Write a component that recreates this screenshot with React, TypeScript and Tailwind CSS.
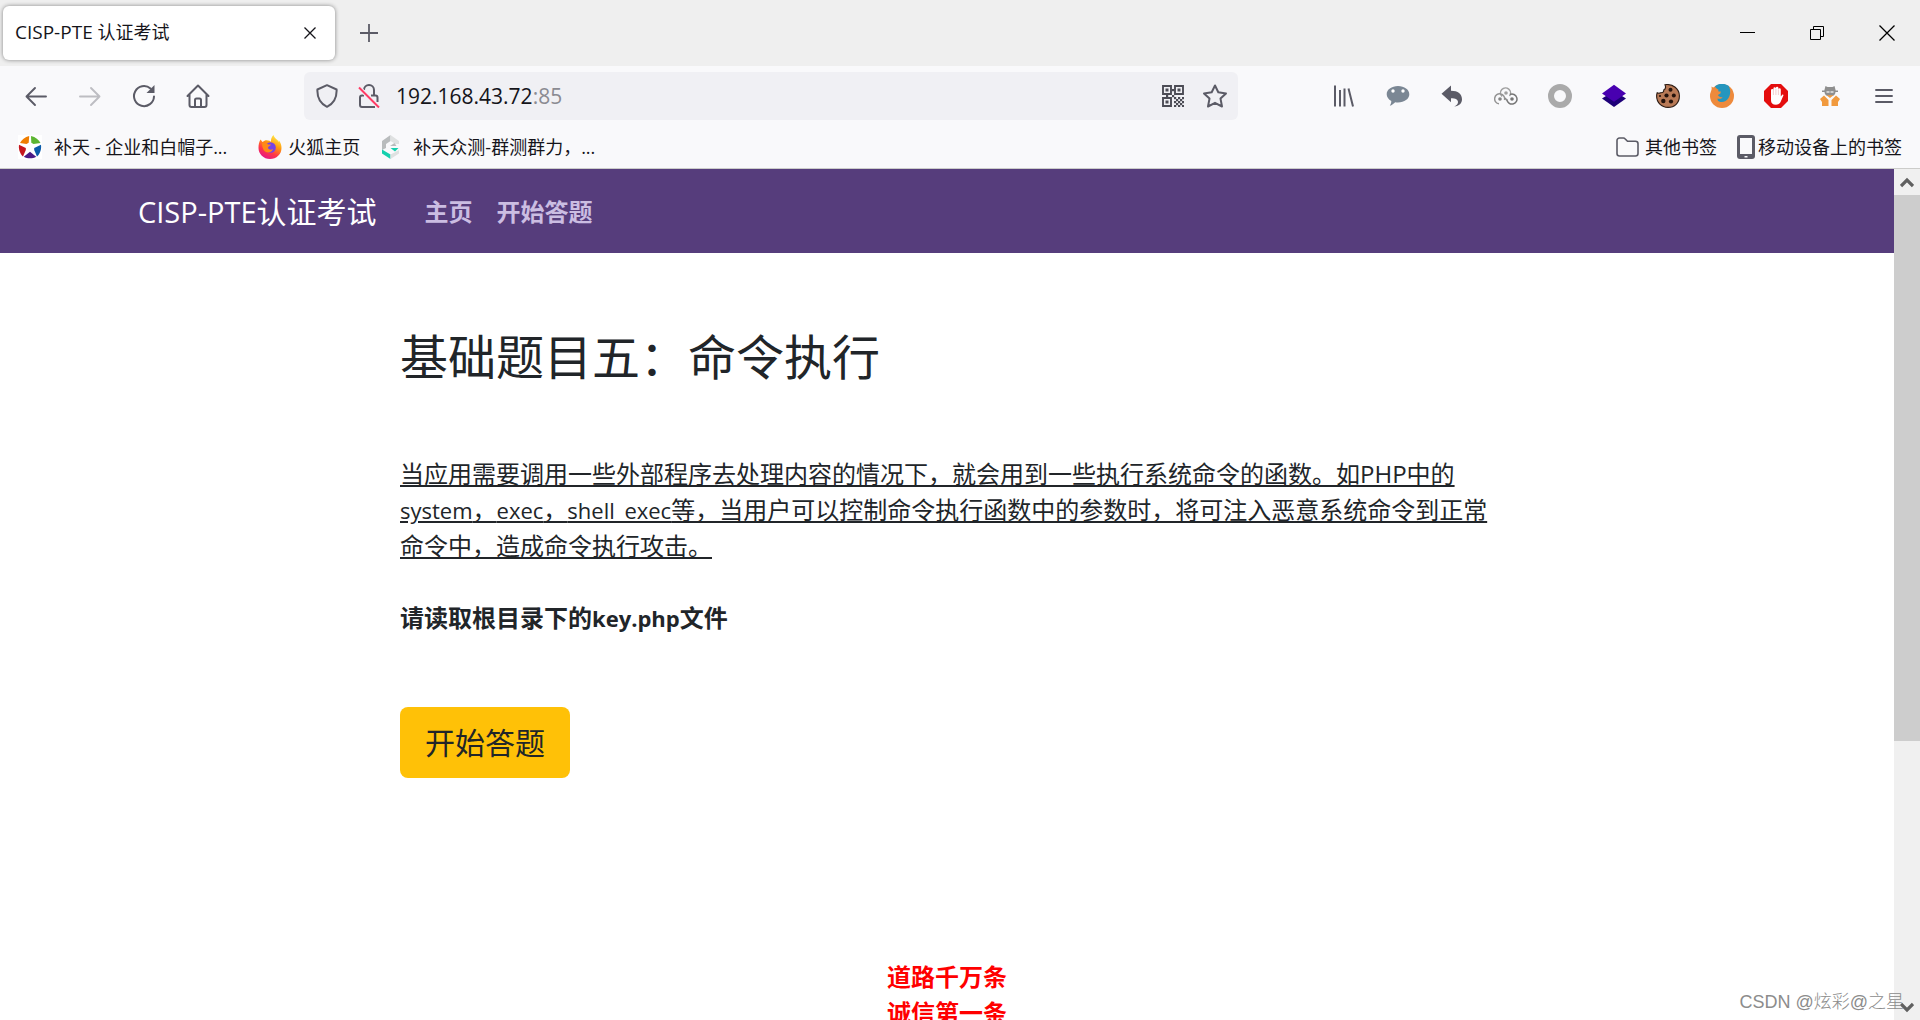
import type { ReactNode } from "react";

const toolbarIcons = [
  { label: "历史与书签", icon: <LibraryIcon /> },
  { label: "聊天", icon: <ChatIcon /> },
  { label: "撤销", icon: <ReplyIcon /> },
  { label: "代理", icon: <LoopsIcon /> },
  { label: "圆环", icon: <RingIcon /> },
  { label: "图层", icon: <LayersIcon /> },
  { label: "Cookie", icon: <CookieIcon /> },
  { label: "Hackbar", icon: <FoxGlobeIcon /> },
  { label: "广告拦截", icon: <StopHandIcon /> },
  { label: "隐私", icon: <SpyIcon /> },
  { label: "菜单", icon: <MenuIcon /> },
];

const navLinks = ["主页", "开始答题"];

export default function App() {
  return (
    <div className="flex h-screen flex-col overflow-hidden bg-white font-['Open_Sans','Noto_Sans_CJK_SC',sans-serif] text-[#15141a]">
      <TabStrip />
      <Toolbar />
      <BookmarksBar />
      <div className="flex min-h-0 flex-1">
        <Page />
        <Scrollbar />
      </div>
      <p className="absolute right-4 bottom-1 font-['Liberation_Sans','Noto_Sans_CJK_SC',sans-serif] text-lg leading-7 font-light text-[#8c8c8c]">
        CSDN @炫彩@之星
      </p>
    </div>
  );
}

function TabStrip() {
  return (
    <div className="flex h-[66px] shrink-0 items-center bg-[#efefef] pl-[3px]">
      <div className="flex h-[54px] w-[332px] items-center justify-between rounded-md bg-white pr-[14px] pl-3 text-lg shadow-[0_0_4px_rgba(0,0,0,0.45)]">
        <span>
          <span className="text-[19px]">CISP-PTE</span> 认证考试
        </span>
        <button type="button" aria-label="关闭标签页" className="p-1">
          <svg width="14" height="14" viewBox="0 0 14 14" stroke="#15141a" strokeWidth="1.3">
            <path d="M1.5 1.5l11 11M12.5 1.5l-11 11" />
          </svg>
        </button>
      </div>
      <button type="button" aria-label="新建标签页" className="ml-6">
        <svg width="20" height="20" viewBox="0 0 20 20" stroke="#5b5b66" strokeWidth="1.8">
          <path d="M10 1v18M1 10h18" />
        </svg>
      </button>
      <div className="ml-auto flex items-center gap-[53px] pr-6">
        <button type="button" aria-label="最小化">
          <svg width="16" height="16" viewBox="0 0 16 16" stroke="#000">
            <path d="M0 7.5h15" />
          </svg>
        </button>
        <button type="button" aria-label="还原">
          <svg width="16" height="16" viewBox="0 0 16 16" fill="none" stroke="#000">
            <path d="M1.5 4.5h10v10h-10zM4.5 4.500v-3h10v10h-3" />
          </svg>
        </button>
        <button type="button" aria-label="关闭">
          <svg width="18" height="18" viewBox="0 0 18 18" stroke="#000" strokeWidth="1.3">
            <path d="M1.5 1.5l15 15M16.5 1.5l-15 15" />
          </svg>
        </button>
      </div>
    </div>
  );
}

function Toolbar() {
  return (
    <div className="flex h-[60px] shrink-0 items-center bg-[#f9f9fb] px-6">
      <div className="flex w-[280px] items-center gap-[30px]">
        <ToolButton label="后退">
          <svg width="24" height="24" viewBox="0 0 24 24" fill="none" stroke="#5b5b66" strokeWidth="1.9" strokeLinecap="round" strokeLinejoin="round">
            <path d="M22 12.500H2.500M11 4L2.500 12.500 11 21" />
          </svg>
        </ToolButton>
        <ToolButton label="前进">
          <svg width="24" height="24" viewBox="0 0 24 24" fill="none" stroke="#bdbdc2" strokeWidth="1.9" strokeLinecap="round" strokeLinejoin="round">
            <path d="M2 12.500h19.500M13 4l8.500 8.500L13 21" />
          </svg>
        </ToolButton>
        <ToolButton label="刷新">
          <svg width="24" height="24" viewBox="0 0 24 24" fill="none" stroke="#5b5b66" strokeWidth="2" strokeLinecap="round">
            <path d="M18.500 4.500A10 10 0 1 0 22 12.500" />
            <path d="M22.500 1v8h-8z" fill="#5b5b66" stroke="none" />
          </svg>
        </ToolButton>
        <ToolButton label="主页">
          <svg width="24" height="26" viewBox="0 0 24 26" fill="none" stroke="#5b5b66" strokeWidth="2" strokeLinecap="round" strokeLinejoin="round">
            <path d="M1.500 13L12 2.500 22.500 13M3.500 11.500V22a2 2 0 0 0 2 2h13a2 2 0 0 0 2-2V11.500" />
            <path d="M9 23.500v-6.500a1.500 1.500 0 0 1 1.500-1.500h3A1.500 1.500 0 0 1 15 17v6.500" />
          </svg>
        </ToolButton>
      </div>
      <div className="flex h-12 w-[934px] items-center rounded-md bg-[#f0f0f4] pr-[10px] pl-3">
        <ShieldIcon />
        <LockOffIcon />
        <div className="relative ml-4 flex-1 text-[21px] leading-7">
          <input aria-label="网址" defaultValue="192.168.43.72:85" className="w-full text-transparent caret-black outline-none" />
          {/* two-tone address: the port is dimmed */}
          <span aria-hidden="true" className="pointer-events-none absolute inset-0">
            192.168.43.72<span className="text-[#8b8b92]">:85</span>
          </span>
        </div>
        <button type="button" aria-label="二维码" className="mr-[18px]">
          <QrIcon />
        </button>
        <button type="button" aria-label="添加书签">
          <svg width="26" height="26" viewBox="0 0 26 26" fill="none" stroke="#5b5b66" strokeWidth="2" strokeLinejoin="round">
            <path d="M13 2.500l3.300 6.800 7.700 1.100-5.500 5.200 1.500 7.900-7-3.700-7 3.700 1.500-7.900L2 10.400l7.700-1.100z" />
          </svg>
        </button>
      </div>
      <div className="ml-auto flex items-center gap-[30px]">
        {toolbarIcons.map((item) => (
          <ToolButton key={item.label} label={item.label}>
            {item.icon}
          </ToolButton>
        ))}
      </div>
    </div>
  );
}

function ToolButton({ label, children }: { label: string; children: ReactNode }) {
  return (
    <button type="button" aria-label={label} className="flex size-6 shrink-0 items-center justify-center">
      {children}
    </button>
  );
}

function BookmarksBar() {
  return (
    <div className="flex h-[43px] shrink-0 items-center border-b border-[#ccccca] bg-[#f9f9fb] pr-[18px] pl-[18px] text-lg">
      <a href="#butian" className="flex items-center gap-3">
        <StarLogo />
        补天 - 企业和白帽子...
      </a>
      <a href="#firefox" className="ml-[31px] flex items-center gap-[6px]">
        <FirefoxLogo />
        火狐主页
      </a>
      <a href="#zhongce" className="ml-5 flex items-center gap-[11px]">
        <HexLogo />
        补天众测-群测群力，...
      </a>
      <button type="button" className="ml-auto flex items-center gap-[6px]">
        <svg width="23" height="20" viewBox="0 0 23 20" fill="none" stroke="#5b5b66" strokeWidth="1.6">
          <path d="M1 3.500A2.500 2.500 0 0 1 3.500 1h4a2 2 0 0 1 1.500.7l2.500 2.600h8A2.500 2.500 0 0 1 22 6.800v9.700a2.500 2.500 0 0 1-2.500 2.500h-16A2.500 2.500 0 0 1 1 16.500z" />
        </svg>
        其他书签
      </button>
      <button type="button" className="ml-5 flex items-center gap-[3px]">
        <svg width="18" height="24" viewBox="0 0 18 24">
          <rect width="18" height="24" rx="3" fill="#5b5b66" />
          <path d="M3 3h12v16H3z" fill="#f9f9fb" />
          <path d="M7.500 21h3v1.500h-3z" fill="#f9f9fb" />
        </svg>
        移动设备上的书签
      </button>
    </div>
  );
}

function Page() {
  return (
    <div className="min-w-0 flex-1 overflow-hidden text-2xl leading-9 text-[#212529]">
      <header className="flex h-[84px] items-center bg-[#563d7c] px-[138px] pt-[2px]">
        <a href="#home" className="text-[30px] text-white">
          <span className="text-[29px]">CISP-PTE</span>认证考试
        </a>
        <nav className="ml-12 flex gap-6 font-bold text-[#cbbde2]">
          {navLinks.map((link) => (
            <a key={link} href={"#" + link}>
              {link}
            </a>
          ))}
        </nav>
      </header>
      <main className="mx-auto w-full max-w-[1094px] pt-[74px]">
        <h1 className="text-5xl leading-[60px]">基础题目五：命令执行</h1>
        <p className="mt-[69px] whitespace-nowrap underline">
          当应用需要调用一些外部程序去处理内容的情况下，就会用到一些执行系统命令的函数。如PHP中的
          <br />
          <span className="text-[22px]">system</span>，<span className="text-[22px]">exec</span>，
          <span className="text-[22px]">shell_exec</span>
          等，当用户可以控制命令执行函数中的参数时，将可注入恶意系统命令到正常
          <br />
          命令中，造成命令执行攻击。
        </p>
        <p className="mt-9 font-bold">
          请读取根目录下的<span className="text-[22px]">key.php</span>文件
        </p>
        <button type="button" className="mt-[71px] h-[71px] rounded-lg bg-[#ffc107] px-[25px] text-[30px]">
          开始答题
        </button>
      </main>
      <footer className="mt-[181px] text-center font-bold text-[#ff0000]">
        <p>道路千万条</p>
        <p>诚信第一条</p>
      </footer>
    </div>
  );
}

function Scrollbar() {
  return (
    <div className="flex w-[26px] shrink-0 flex-col bg-[#f0f0f0]">
      <div className="flex h-[26px] items-center justify-center">
        <svg width="14" height="11" viewBox="0 0 14 11" fill="none" stroke="#606060" strokeWidth="3.2">
          <path d="M1 9l6-6 6 6" />
        </svg>
      </div>
      <div className="h-2/3 max-h-[546px] bg-[#cdcdcd]" />
      <div className="mt-auto flex h-[26px] items-center justify-center">
        <svg width="14" height="11" viewBox="0 0 14 11" fill="none" stroke="#606060" strokeWidth="3.2">
          <path d="M1 2l6 6 6-6" />
        </svg>
      </div>
    </div>
  );
}

function ShieldIcon() {
  return (
    <svg width="22" height="24" viewBox="0 0 22 24" fill="none" stroke="#5b5b66" strokeWidth="2" strokeLinejoin="round">
      <path d="M11 1.200l9.600 4.300c.3 7-2.600 13.800-9.600 17.300C4 19.300 1.100 12.500 1.400 5.500z" />
    </svg>
  );
}

function LockOffIcon() {
  return (
    <svg className="ml-5" width="22" height="24" viewBox="0 0 22 24" fill="none" strokeWidth="2">
      <path d="M6 6a5 5 0 0 1 10 0v5.500M13 11.500h4.500a2 2 0 0 1 2 2V18M6 11.500H4a2 2 0 0 0-2 2v7.500a2 2 0 0 0 2 2h13" stroke="#5b5b66" />
      <path d="M1 3.500L21 23.500" stroke="#f0f0f4" strokeWidth="4" />
      <path d="M1 3.500L21 23.500" stroke="#ff3b64" />
    </svg>
  );
}

function QrIcon() {
  const cells = [
    [12, 12], [16, 12], [20, 12], [14, 14], [18, 14], [12, 16], [16, 16], [20, 16],
    [14, 18], [18, 18], [12, 20], [16, 20], [20, 20], [10, 4], [4, 10], [10, 10],
  ];
  return (
    <svg width="22" height="22" viewBox="0 0 22 22" fill="none" stroke="#4c4c55" strokeWidth="1.9">
      <path d="M1 1h8v8H1zM13 1h8v8h-8zM1 13h8v8H1z" />
      <path d="M3.500 3.500h3v3h-3zM15.500 3.500h3v3h-3zM3.500 15.500h3v3h-3z" fill="#4c4c55" stroke="none" />
      {cells.map(([x, y]) => (
        <rect key={x + "-" + y} x={x} y={y} width="2.2" height="2.2" fill="#4c4c55" stroke="none" />
      ))}
    </svg>
  );
}

function LibraryIcon() {
  return (
    <svg width="20" height="22" viewBox="0 0 20 22" stroke="#5b5b66" strokeWidth="2">
      <path d="M1 .5v21M6 5v16.500M10.500 3.500v18M14.500 3.500l4.500 18" />
    </svg>
  );
}

function ChatIcon() {
  return (
    <svg className="shrink-0" width="24" height="22" viewBox="0 0 24 22">
      <path d="M12 1c6.400 0 11.300 3.600 11.300 8.300S18.400 17.500 12 17.500c-1 0-2 0-2.800-.2C7.700 18.800 6 20.300 3.800 20.700c1-1.300 1.500-2.700 1.500-4.600C2.500 14.500.7 12 .7 9.300.7 4.600 5.600 1 12 1z" fill="#7b8794" />
      <circle cx="7" cy="6" r="1.700" fill="#fff" />
      <circle cx="17" cy="6" r="1.700" fill="#fff" />
    </svg>
  );
}

function ReplyIcon() {
  return (
    <svg width="22" height="22" viewBox="0 0 22 22" fill="#5b5b66">
      <path d="M10 .5v5.300c7 0 11 3.300 11 8.500 0 4-2.800 6.700-7.700 7.200 2.600-1.200 3.700-2.600 3.700-4.500 0-2.500-2.300-3.800-7-3.800v4L.5 8.800z" />
    </svg>
  );
}

function LoopsIcon() {
  return (
    <svg className="shrink-0" width="24" height="18" viewBox="0 0 24 18" fill="none" strokeWidth="1.500">
      <path d="M8 9.500A5 5 0 1 1 15.500 9" stroke="#a0a0a0" />
      <circle cx="12" cy="6" r="1.800" fill="#a0a0a0" />
      <path d="M5 16.800A5 5 0 1 1 10.500 13" stroke="#949494" />
      <circle cx="6" cy="12" r="1.800" fill="#858585" />
      <path d="M13 12.500a5 5 0 1 0 3-5" stroke="#757575" />
      <circle cx="18" cy="12" r="1.800" fill="#757575" />
      <path d="M11 11l2.500 3" stroke="#8a8a8a" />
    </svg>
  );
}

function RingIcon() {
  return (
    <svg width="24" height="24" viewBox="0 0 24 24" fill="none">
      <circle cx="12" cy="12" r="9" stroke="#aaaaaa" strokeWidth="6" />
    </svg>
  );
}

function LayersIcon() {
  return (
    <svg width="24" height="24" viewBox="0 0 24 24">
      <path d="M0 14.500l4-2.500h16l4 2.500L12 23z" fill="#1e0078" />
      <path d="M12 .8L24 9.500l-12 8.300L0 9.500z" fill="#4800b0" />
    </svg>
  );
}

function CookieIcon() {
  return (
    <svg width="24" height="24" viewBox="0 0 24 24">
      <path d="M9 .7C17-.5 23.400 5 23.400 12S18.500 23.400 12 23.400.6 18.500.6 12c0-1.300.2-2.300.6-3.300 1.300.8 2.300.7 3.300 0 2.300.2 3.500-.7 3.200-2.700C9.700 5 10 3 9 .7z" fill="#b97a56" stroke="#2c1c14" strokeWidth="1.100" />
      <g fill="#24130c">
        <circle cx="14.500" cy="5.800" r="2" />
        <circle cx="10.500" cy="11.500" r="2.100" />
        <circle cx="17.800" cy="11.500" r="2" />
        <circle cx="7.300" cy="17" r="2.200" />
        <circle cx="15" cy="17.500" r="2.100" />
        <circle cx="4" cy="12" r="1.100" />
      </g>
    </svg>
  );
}

function FoxGlobeIcon() {
  return (
    <svg width="24" height="24" viewBox="0 0 24 24">
      <circle cx="12" cy="12" r="12" fill="#ee8a3c" />
      <path d="M5 2.300A12 12 0 0 1 18.500 1.800C20.500 5 21 10 18.500 14c-1.800 3.200-5 4.500-8 4-2.500-.5-3.300-2-2.800-3.600 2.200.8 3.600.2 5-1.200-2.200.1-4-.7-4.800-2.300l2.500-1.500.5-2C8.800 7.800 8 7.500 8.400 5.600 7 5 5.500 4 5 2.300z" fill="#2596be" />
      <path d="M1.500 2.500c1.500 1 2.800 1.700 4.500 1.800L2 9z" fill="#ee8a3c" />
    </svg>
  );
}

function StopHandIcon() {
  return (
    <svg width="24" height="24" viewBox="0 0 24 24">
      <path d="M7 0h10l7 7v10l-7 7H7l-7-7V7z" fill="#e40d0d" />
      <path d="M7 13V6.300a1.200 1.200 0 0 1 2.400 0V4.500a1.200 1.200 0 0 1 2.500 0V4a1.200 1.200 0 0 1 2.500 0v1.500a1.200 1.200 0 0 1 2.400 0v7l1.200-1.500c.8-.8 1.700-.3 1.400.6L17 17c-1 2.500-2.500 3.700-5 3.700-3.500 0-5-1.700-5-4.500z" fill="#fff" />
      <path d="M9.400 6v5M11.900 5v6M14.400 5.500V11" stroke="#e9a0a0" strokeWidth=".5" />
    </svg>
  );
}

function SpyIcon() {
  return (
    <svg width="20" height="22" viewBox="0 0 20 22">
      <path d="M5.500 1l2 1h5l2-1 1.200 4.500H18V7h-2.500c0 2.800-2 4.300-5.500 4.300S4.500 9.800 4.500 7H2V5.500h2.300z" fill="#8f8f8f" />
      <path d="M6.500 7h3M10.500 7h3" stroke="#e3e3e3" strokeWidth="1.300" />
      <path d="M0 14l4-3.500L8.500 15v6H2v-4zM20 14l-4-3.500-4.500 4.500v6H18v-4z" fill="#f19a3e" />
      <path d="M6.500 10.300h7L10 13z" fill="#f19a3e" />
    </svg>
  );
}

function MenuIcon() {
  return (
    <svg width="18" height="16" viewBox="0 0 18 16" stroke="#5b5b66" strokeWidth="1.9" strokeLinecap="round">
      <path d="M1 2h16M1 8h16M1 14h16" />
    </svg>
  );
}

function StarLogo() {
  return (
    <svg width="24" height="24" viewBox="0 0 24 24">
      <path d="M0 0h24v24H0z" fill="#fff" />
      <path d="M11.200 1l-.5 6.800L8.500 9 2 8c1.500-3 5-6 9.200-7z" fill="#ef7d00" />
      <path d="M13 1l.3 6.800L15.500 9 22.500 8c-1.500-3-5-6-9.500-7z" fill="#5cb531" />
      <path d="M1 9.800l6.800 3.200v2L5 21.500C2 19 .3 14 1 9.800z" fill="#c5161d" />
      <path d="M23 9.800l-6.800 3.200v2l2.800 6.500c3-2.500 4.700-7.500 4-11.700z" fill="#0b5cab" />
      <path d="M12 16.700l6.200 5c-3.500 2-8.800 2-12.400 0z" fill="#4b1a86" />
    </svg>
  );
}

function FirefoxLogo() {
  return (
    <svg width="24" height="24" viewBox="0 0 24 24">
      <defs>
        <linearGradient id="flame" x1="0.8" y1="0" x2="0.3" y2="1">
          <stop offset="0" stopColor="#fff44f" />
          <stop offset="0.4" stopColor="#ff980e" />
          <stop offset="0.7" stopColor="#ff3647" />
          <stop offset="1" stopColor="#e31587" />
        </linearGradient>
      </defs>
      <path d="M15.500 0c1 3.500 4 4.500 5.500 7 0-.7-.2-1.300-.4-2C22.800 7.500 23.500 10.500 23.500 13c0 6.300-5 11-11.500 11S.5 19 .5 13c0-3.300.7-6.500 2-8.500L4.500 7l2.500-1.500C9.500 5 12.500 6 13 7c-.2-2.500.5-5.500 2.500-7z" fill="url(#flame)" />
      <circle cx="12.500" cy="12.500" r="5.300" fill="#7542e5" />
      <path d="M4 8c2.500-1 5 0 6 1.500h3c-.5 1.800-3 1.800-3 3 0 2 3 3 5 1.500-1 3.500-5 4.500-8 2.500C5 15 4 11.500 4 8z" fill="#ff8a16" />
    </svg>
  );
}

function HexLogo() {
  return (
    <svg width="22" height="24" viewBox="0 0 22 24">
      <path d="M10.500 0v6L6 9v4l-4 2V6z" fill="#b9bcbd" />
      <path d="M10.500 0L19 6v3h-3.500l-5-3z" fill="#dfe1e1" />
      <path d="M2 14.500l8.500 5V24L2 18.500z" fill="#15d0ae" />
      <path d="M10.500 24v-4.500l5-2.500 3.500-2v3.500z" fill="#dfe1e1" />
      <path d="M10 11h6.500l-2-3z" fill="#b9bcbd" />
      <path d="M10.500 13h8l-3.500 3.500z" fill="#15d0ae" />
    </svg>
  );
}
